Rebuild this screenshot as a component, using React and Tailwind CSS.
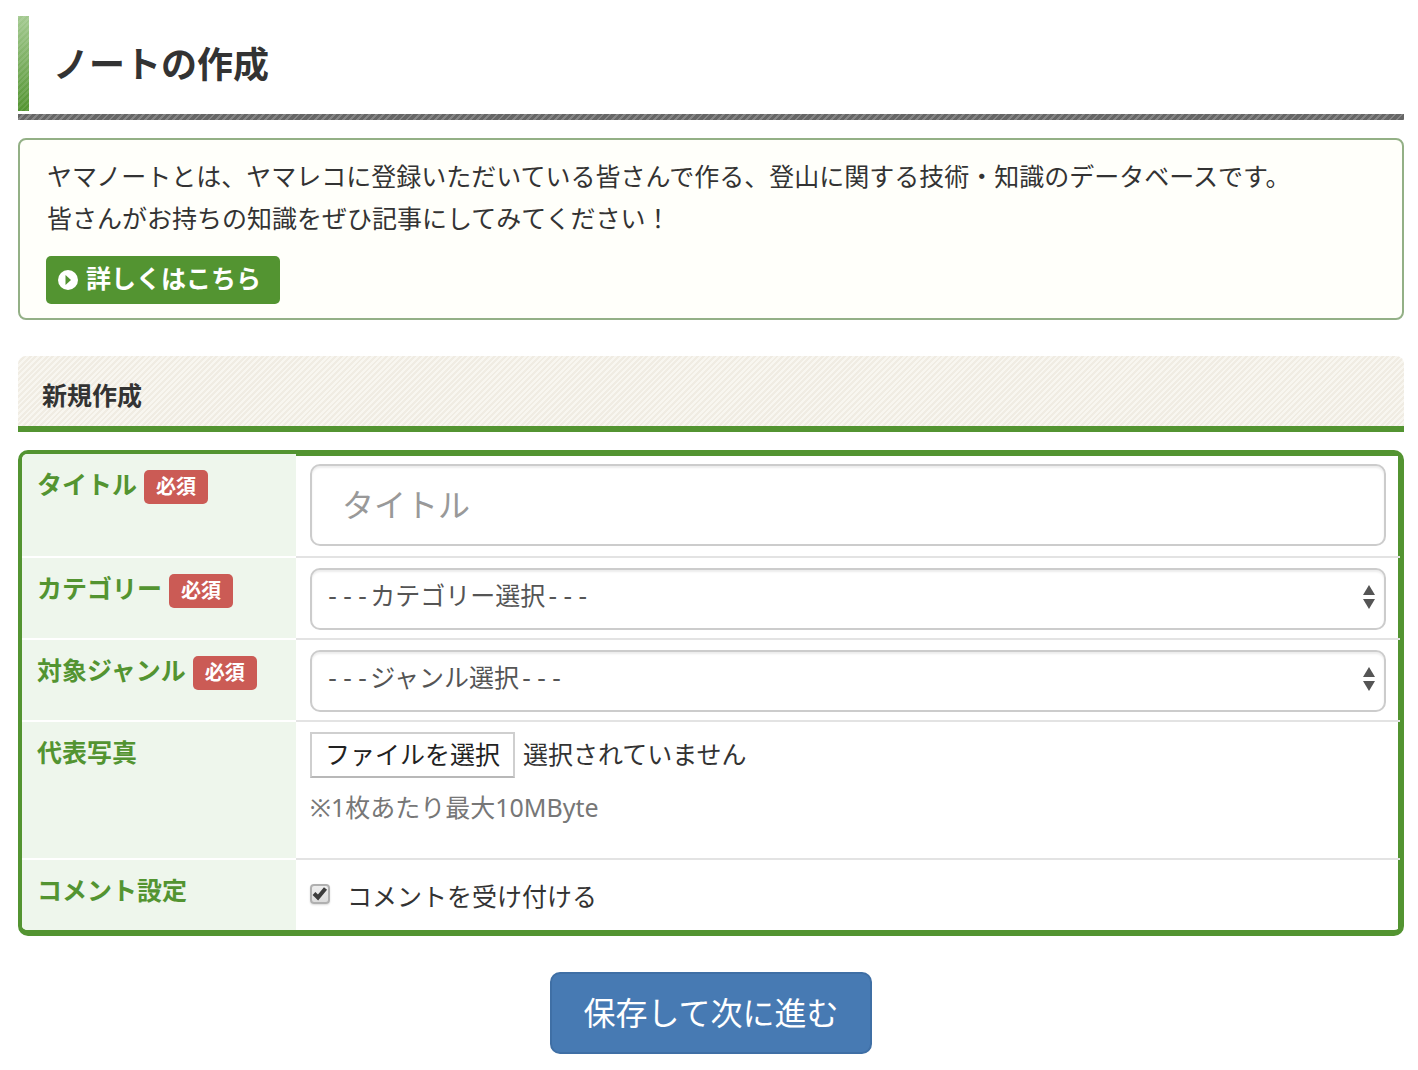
import React, { useState } from "react";

const rowBase = "grid grid-cols-[274px_1fr]";

const RequiredBadge = () => (
  <span className="ml-[7px] h-[34px] rounded-[5px] bg-[#cb5b55] px-3 text-[20px] leading-[34px] font-bold text-white">
    必須
  </span>
);

const FormRow = ({ label, htmlFor, required, first, last, className, children }) => (
  <div className={rowBase}>
    <div
      className={`flex items-start bg-[#eef6ec] pt-2 pl-[15px] ${
        first ? "rounded-tl-[5px]" : ""
      } ${last ? "rounded-bl-[5px]" : "border-b-2 border-white"}`}
    >
      <label htmlFor={htmlFor} className="text-[25px] leading-[44px] font-bold text-[#539431]">
        {label}
      </label>
      {required && (
        <div className="flex pt-2">
          <RequiredBadge />
        </div>
      )}
    </div>
    <div className={last ? "" : "border-b-2 border-[#e3e3e3]"}>
      <div
        className={`h-full border-r-2 border-[#539431] pr-3 pl-[14px] ${
          first ? "border-t-2 pt-2" : "pt-[10px]"
        } ${className}`}
      >
        {children}
      </div>
    </div>
  </div>
);

const SelectBox = ({ id, placeholder, options }) => (
  <div className="relative">
    <select
      id={id}
      defaultValue=""
      className="block h-[62px] w-full appearance-none rounded-[10px] border-2 border-[#cccccc] bg-white pr-10 pb-1 pl-[13px] font-['DejaVu_Sans_Mono','Noto_Sans_CJK_JP',sans-serif] text-[25px] text-[#555555] shadow-[inset_0_2px_2px_rgba(0,0,0,0.075)]"
    >
      <option value="">{placeholder}</option>
      {options.map((option) => (
        <option key={option} value={option}>
          {option}
        </option>
      ))}
    </select>
    <svg
      viewBox="0 0 12 24"
      className="pointer-events-none absolute top-[17px] right-[11px] h-6 w-3"
      fill="#555555"
      aria-hidden="true"
    >
      <path d="M6 0L12 10H0Z" />
      <path d="M0 14H12L6 24Z" />
    </svg>
  </div>
);

const App = () => {
  const [title, setTitle] = useState("");
  const [fileName, setFileName] = useState("");
  const [acceptComments, setAcceptComments] = useState(true);

  return (
    <main className="bg-white pt-4 pr-[14px] pb-4 pl-[18px] font-['Noto_Sans','Noto_Sans_CJK_JP',sans-serif] text-[25px] text-[#333333]">
      <header className="mb-[18px]">
        <div className="mb-[3px] flex h-[95px]">
          <div className="w-[11px] bg-[repeating-linear-gradient(135deg,rgba(255,255,255,0.1)_0_2px,transparent_2px_4px),linear-gradient(#a3c990,#539431)]" />
          <h1 className="pt-[22px] pl-6 text-[36px] leading-[54px] font-bold">ノートの作成</h1>
        </div>
        <div className="h-[6px] bg-[repeating-linear-gradient(135deg,#666666_0_3px,#858585_3px_5px)]" />
      </header>

      <section className="mb-9 rounded-[8px] border-2 border-[#93b086] bg-[#fffffa] px-[26px] pt-[15px] pb-[14px]">
        <p className="pl-[1px] leading-[42px]">
          ヤマノートとは、ヤマレコに登録いただいている皆さんで作る、登山に関する技術・知識のデータベースです。
          <br />
          皆さんがお持ちの知識をぜひ記事にしてみてください！
        </p>
        <a
          href="#about"
          className="mt-[17px] inline-flex h-12 items-center gap-2 rounded-[5px] bg-[#539431] pr-[19px] pl-3 align-top leading-[48px] font-bold text-white"
        >
          <svg viewBox="0 0 20 20" className="h-5 w-5" aria-hidden="true">
            <circle cx="10" cy="10" r="10" fill="#ffffff" />
            <path d="M7.5 5L13 10L7.5 15Z" fill="#539431" />
          </svg>
          <span className="pb-1">詳しくはこちら</span>
        </a>
      </section>

      <h2 className="mb-[18px] rounded-t-[8px] border-b-6 border-[#539431] bg-[repeating-linear-gradient(135deg,#f0ece3_0_2px,#f8f6f0_2px_4px)] pt-[18px] pb-[10px] pl-6 text-[25px] leading-[42px] font-bold">
        新規作成
      </h2>

      <form onSubmit={(e) => e.preventDefault()}>
        <div className="rounded-[10px] border-4 border-b-6 border-[#539431]">
          <FormRow label="タイトル" htmlFor="title" required first className="pb-[10px]">
            <input
              id="title"
              type="text"
              placeholder="タイトル"
              value={title}
              onChange={(e) => setTitle(e.target.value)}
              className="block h-[82px] w-full rounded-[10px] border-2 border-[#cccccc] px-[30px] pb-[2px] text-[32px] text-[#555555] shadow-[inset_0_2px_2px_rgba(0,0,0,0.075)] placeholder:text-[#999999]"
            />
          </FormRow>
          <FormRow label="カテゴリー" htmlFor="category" required className="pb-2">
            <SelectBox
              id="category"
              placeholder="---カテゴリー選択---"
              options={["装備", "技術", "知識"]}
            />
          </FormRow>
          <FormRow label="対象ジャンル" htmlFor="genre" required className="pb-2">
            <SelectBox
              id="genre"
              placeholder="---ジャンル選択---"
              options={["ハイキング", "無雪期登山", "積雪期登山"]}
            />
          </FormRow>
          <FormRow label="代表写真" htmlFor="photo" className="pb-7">
            <div className="flex items-center">
              <input
                id="photo"
                type="file"
                className="sr-only"
                onChange={(e) => setFileName(e.target.files[0]?.name || "")}
              />
              <label
                htmlFor="photo"
                className="h-[46px] border-2 border-[#cfcfcf] border-b-[#b8b8b8] px-[13px] leading-[40px] text-[#222222]"
              >
                ファイルを選択
              </label>
              <span className="ml-2 pb-[2px] leading-[42px]">{fileName || "選択されていません"}</span>
            </div>
            <p className="mt-2 mb-[2px] leading-[42px] text-[#777777]">※1枚あたり最大10MByte</p>
          </FormRow>
          <FormRow label="コメント設定" htmlFor="comments" last className="pb-3">
            <label className="flex h-12 items-center">
              <span className="relative block h-5 w-5">
                <input
                  id="comments"
                  type="checkbox"
                  checked={acceptComments}
                  onChange={(e) => setAcceptComments(e.target.checked)}
                  className="block h-5 w-5 appearance-none rounded-[4px] border-2 border-[#b0b0b0] bg-linear-to-b from-[#eeeeee] to-[#dcdcdc] shadow-[0_1px_2px_rgba(0,0,0,0.15)]"
                />
                {acceptComments && (
                  <svg
                    viewBox="0 0 20 20"
                    className="pointer-events-none absolute inset-0 h-5 w-5"
                    fill="none"
                    stroke="#3c3c3c"
                    strokeWidth="4"
                    aria-hidden="true"
                  >
                    <path d="M4 9.5L8 13.5L15.5 4.5" />
                  </svg>
                )}
              </span>
              <span className="pt-1 pl-[17px] leading-[42px]">コメントを受け付ける</span>
            </label>
          </FormRow>
        </div>

        <div className="mt-9 flex justify-center">
          <button
            type="submit"
            className="h-[82px] rounded-[10px] border-2 border-[#3f6fa5] bg-[#477ab3] px-[31px] text-[32px] text-white"
          >
            保存して次に進む
          </button>
        </div>
      </form>
    </main>
  );
};

export default App;
